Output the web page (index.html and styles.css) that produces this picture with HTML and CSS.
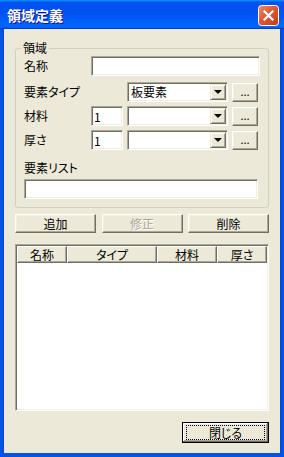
FILE: index.html
```html
<!DOCTYPE html>
<html lang="ja">
<head>
  <meta charset="UTF-8">
  <title>領域定義</title>
  <link rel="stylesheet" href="styles.css">
</head>
<body>
  <div class="window">
    <div class="title-bar">
      <span class="title-text">領域定義</span>
      <button class="close-x" aria-label="閉じる">
        <svg width="21" height="21" viewBox="0 0 21 21">
          <defs>
            <linearGradient id="xg" x1="0" y1="0" x2="1" y2="1">
              <stop offset="0" stop-color="#ED8A6B"/>
              <stop offset="0.45" stop-color="#DD5A36"/>
              <stop offset="1" stop-color="#C23A18"/>
            </linearGradient>
          </defs>
          <rect x="0.5" y="0.5" width="20" height="20" rx="3" fill="url(#xg)" stroke="#fff"/>
          <path d="M6.5 6.5 L14.5 14.5 M14.5 6.5 L6.5 14.5" stroke="#fff" stroke-width="2.2" stroke-linecap="square"/>
        </svg>
      </button>
    </div>

    <div class="client">
      <fieldset class="group">
        <legend>領域</legend>
        <div class="form-grid">
          <label class="lbl">名称</label>
          <input type="text" class="field name-field">

          <label class="lbl">要素タイプ</label>
          <div class="combo wide-combo">
            <span class="combo-text">板要素</span>
            <span class="combo-arrow"></span>
          </div>
          <button class="btn dots">...</button>

          <label class="lbl">材料</label>
          <input type="text" class="field small-field" value="1">
          <div class="combo">
            <span class="combo-text"></span>
            <span class="combo-arrow"></span>
          </div>
          <button class="btn dots">...</button>

          <label class="lbl">厚さ</label>
          <input type="text" class="field small-field" value="1">
          <div class="combo">
            <span class="combo-text"></span>
            <span class="combo-arrow"></span>
          </div>
          <button class="btn dots">...</button>
        </div>

        <div class="list-label">要素リスト</div>
        <input type="text" class="field list-field">
      </fieldset>

      <div class="btn-row">
        <button class="btn action">追加</button>
        <button class="btn action" disabled>修正</button>
        <button class="btn action">削除</button>
      </div>

      <div class="listview">
        <div class="lv-header">
          <span class="lv-col col-name">名称</span>
          <span class="lv-col col-type">タイプ</span>
          <span class="lv-col col-mat">材料</span>
          <span class="lv-col col-thk">厚さ</span>
        </div>
        <div class="lv-body"></div>
      </div>

      <div class="footer">
        <button class="btn default-btn"><span class="focus">閉じる</span></button>
      </div>
    </div>
  </div>
</body>
</html>
```

FILE: styles.css
```css
* { box-sizing: border-box; }
html, body { margin: 0; padding: 0; }
body { width: 284px; height: 457px; font-family: "Noto Sans CJK JP", "MS UI Gothic", sans-serif; font-size: 12px; color: #000; font-feature-settings: "palt"; overflow: hidden; }

.window { width: 284px; height: 457px; display: flex; flex-direction: column; background: #0054E3; }

/* title bar */
.title-bar { height: 29px; flex: none; display: flex; align-items: center; justify-content: space-between; padding: 0 5px 0 7px; background: linear-gradient(180deg, #0997ff, #0053ee 8%, #0050ee 40%, #06f 88%, #06f 93%, #005bff 95%, #003dd7 96%, #003dd7); }
.title-text { color: #fff; font-weight: bold; font-size: 14px; line-height: 16px; text-shadow: 1px 1px #0f1089; }
.close-x { width: 21px; height: 21px; padding: 0; border: none; background: none; display: block; margin-top: 1px; }
.close-x svg { display: block; }

/* client area */
.client { flex: 1; display: flex; flex-direction: column; background: #ECE9D8; margin: 0 4px 4px; padding: 0 11px 10px; box-shadow: -1px 0 #0845D8, 1px 0 #0845D8; }

.group { margin: 12px 0 0; padding: 1px 7px 8px 8px; border: 1px solid #D0D0BF; border-radius: 3px; min-width: 0; }
.group legend { padding: 0 2px; margin-left: -3px; line-height: 14px; }

.form-grid { display: grid; grid-template-columns: 63px 32px 101px 26px; grid-template-rows: 22px 20px 20px 20px; column-gap: 4px; row-gap: 4px; align-items: center; }
.lbl { line-height: 14px; }
.name-field { grid-column: 2 / 5; width: 169px; align-self: start; }
.form-grid > .lbl:first-child { align-self: start; margin-top: 3px; }
.wide-combo { grid-column: 3; }

/* sunken edit fields */
.field { height: 20px; padding: 0 2px; font: inherit; font-size: 12px; color: #000; background: #fff; border: 1px solid; border-color: #ACA899 #fff #fff #ACA899; box-shadow: inset 1px 1px #716F64, inset -1px -1px #F1EFE2; outline: none; }
.small-field { width: 32px; }

.combo { height: 20px; display: flex; padding: 1px; background: #fff; border: 1px solid; border-color: #ACA899 #fff #fff #ACA899; box-shadow: inset 1px 1px #716F64, inset -1px -1px #F1EFE2; }
.combo-text { flex: 1; padding-left: 2px; line-height: 16px; }
.combo-arrow { width: 16px; height: 16px; position: relative; background: #ECE9D8; border: 1px solid; border-color: #ECE9D8 #716F64 #716F64 #ECE9D8; box-shadow: inset 1px 1px #fff, inset -1px -1px #ACA899; }
.combo-arrow::after { content: ""; position: absolute; left: 3px; top: 5px; border-top: 4px solid #000; border-left: 4px solid transparent; border-right: 4px solid transparent; }

.list-label { margin-top: 11px; line-height: 14px; }
.list-field { display: block; width: 234px; margin-top: 4px; }

/* raised buttons */
.btn { font: inherit; font-size: 12px; color: #000; background: #ECE9D8; border: 1px solid; border-color: #fff #716F64 #716F64 #fff; box-shadow: inset -1px -1px #ACA899, inset 1px 1px #F1EFE2; padding: 0; cursor: pointer; }
.dots { width: 26px; height: 19px; line-height: 12px; font-size: 11px; padding-bottom: 2px; }
.btn:disabled { color: #ACA899; text-shadow: 1px 1px #fff; }

.btn-row { display: flex; justify-content: space-between; margin-top: 6px; }
.action { width: 81px; height: 19px; line-height: 15px; }

/* list view */
.listview { flex: 1; margin-top: 11px; display: flex; flex-direction: column; background: #fff; border: 1px solid; border-color: #ACA899 #fff #fff #ACA899; box-shadow: inset 1px 1px #716F64, inset -1px -1px #F1EFE2; padding: 1px; }
.lv-header { display: flex; height: 17px; flex: none; }
.lv-col { height: 17px; line-height: 15px; text-align: center; background: #ECE9D8; border: 1px solid; border-color: #fff #716F64 #716F64 #fff; box-shadow: inset -1px -1px #ACA899; }
.col-name { width: 50px; }
.col-type { width: 90px; }
.col-mat { width: 60px; }
.col-thk { width: 50px; }
.lv-body { flex: 1; }

.footer { display: flex; justify-content: flex-end; margin-top: 11px; }
.default-btn { width: 87px; height: 21px; padding: 2px; border: 1px solid #000; box-shadow: inset -1px -1px #716F64, inset 1px 1px #fff, inset -2px -2px #ACA899; }
.focus { display: block; height: 15px; line-height: 13px; border: 1px dotted #000; margin: 0 1px; }
```
